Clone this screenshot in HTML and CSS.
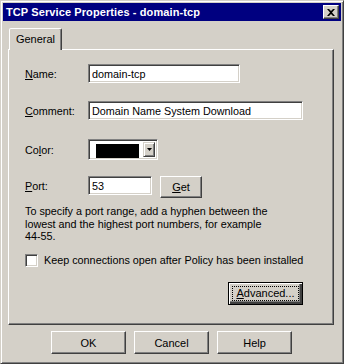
FILE: index.html
```html
<!DOCTYPE html>
<html lang="en">
<head>
    <meta charset="UTF-8">
    <title>TCP Service Properties - domain-tcp</title>
    <link rel="stylesheet" href="styles.css">
</head>
<body>

    <div class="window">
        <!-- Title bar -->
        <div class="titlebar">
            <span class="title">TCP Service Properties - domain-tcp</span>
            <button class="close-btn">
                <svg width="8" height="7" viewBox="0 0 8 7">
                    <path d="M0 0h2l2 2 2-2h2l-3 3.5 3 3.5h-2l-2-2-2 2h-2l3-3.5z" fill="#000"/>
                </svg>
            </button>
        </div>

        <!-- Tab sheet -->
        <div class="sheet">
            <div class="tabs">
                <div class="tab">General</div>
            </div>
            <div class="panel">
                <div class="row row-name">
                    <label class="label"><u>N</u>ame:</label>
                    <div class="field field-name">domain-tcp</div>
                </div>
                <div class="row row-comment">
                    <label class="label"><u>C</u>omment:</label>
                    <div class="field field-comment">Domain Name System Download</div>
                </div>
                <div class="row row-color">
                    <label class="label">Co<u>l</u>or:</label>
                    <div class="combo">
                        <div class="swatch-area"><div class="swatch"></div></div>
                        <div class="combo-btn">
                            <svg width="5" height="3" viewBox="0 0 5 3"><path d="M0 0h5l-2.5 3z" fill="#000"/></svg>
                        </div>
                    </div>
                </div>
                <div class="row row-port">
                    <label class="label"><u>P</u>ort:</label>
                    <div class="field field-port">53</div>
                    <button class="btn btn-get"><u>G</u>et</button>
                </div>
                <p class="hint">To specify a port range, add a hyphen between the<br>lowest and the highest port numbers, for example<br>44-55.</p>
                <div class="check-row">
                    <span class="checkbox"></span>
                    <span class="check-label">Keep connections open after Policy has been installed</span>
                </div>
                <button class="btn btn-default"><span class="focus"><u>A</u>dvanced...</span></button>
            </div>
        </div>

        <!-- Dialog buttons -->
        <div class="dialog-buttons">
            <button class="btn btn-dialog">OK</button>
            <button class="btn btn-dialog">Cancel</button>
            <button class="btn btn-dialog">Help</button>
        </div>
    </div>

</body>
</html>
```

FILE: styles.css
```css
/* Global */
body, html {
    margin: 0;
    padding: 0;
    background-color: #d4d0c8;
    font-family: "Liberation Sans", Arial, sans-serif;
    font-size: 10.8px;
    color: #000;
}

u {
    text-decoration: underline;
    text-underline-offset: 1px;
}

/* Window frame */
.window {
    width: 344px;
    height: 364px;
    box-sizing: border-box;
    border: 1px solid;
    border-color: #d4d0c8 #404040 #404040 #d4d0c8;
    box-shadow: inset 1px 1px #fff, inset -1px -1px #808080;
    padding: 2px;
    background-color: #d4d0c8;
}

/* Title bar */
.titlebar {
    height: 18px;
    display: flex;
    align-items: center;
    justify-content: space-between;
    padding: 0 2px 0 3px;
    background-color: #000080;
    color: #fff;
}

.title {
    font-weight: bold;
    font-size: 11px;
    letter-spacing: 0.1px;
}

.close-btn {
    width: 16px;
    height: 14px;
    padding: 0;
    display: flex;
    align-items: center;
    justify-content: center;
    background-color: #d4d0c8;
    border: 1px solid;
    border-color: #fff #404040 #404040 #fff;
    box-shadow: inset -1px -1px #808080;
}

/* Tab sheet */
.sheet {
    margin: 7px 0 0 5px;
    width: 326px;
}

.tabs {
    display: flex;
    padding-left: 1px;
}

.tab {
    position: relative;
    z-index: 1;
    width: 53px;
    height: 22px;
    box-sizing: border-box;
    margin-bottom: -1px;
    padding-top: 4px;
    text-align: center;
    font-size: 11px;
    background-color: #d4d0c8;
    border: 1px solid;
    border-bottom: none;
    border-color: #fff #404040 transparent #fff;
    border-radius: 2px 2px 0 0;
    box-shadow: inset -1px 0 #808080;
}

.panel {
    height: 276px;
    box-sizing: border-box;
    border: 1px solid;
    border-color: #fff #404040 #404040 #fff;
    box-shadow: inset -1px -1px #808080;
    padding: 14px 30px 0 16px;
    display: flex;
    flex-direction: column;
}

/* Form rows */
.row {
    display: flex;
    align-items: center;
}

.row-comment {
    margin-top: 18px;
}

.row-color {
    margin-top: 19px;
}

.row-port {
    margin-top: 16px;
    align-items: flex-start;
}

.label {
    width: 63px;
    flex-shrink: 0;
}

.row-port .label {
    line-height: 20px;
}

.field {
    height: 19px;
    box-sizing: border-box;
    border: 1px solid;
    border-color: #808080 #fff #fff #808080;
    box-shadow: inset 1px 1px #404040, inset -1px -1px #d4d0c8;
    background-color: #fff;
    padding: 2px 0 0 3px;
    line-height: 14px;
    white-space: nowrap;
}

.field-name {
    width: 152px;
}

.field-comment {
    width: 215px;
}

.field-port {
    width: 64px;
}

/* Colour combo */
.combo {
    width: 70px;
    height: 21px;
    box-sizing: border-box;
    border: 1px solid;
    border-color: #808080 #fff #fff #808080;
    box-shadow: inset 1px 1px #404040, inset -1px -1px #d4d0c8;
    background-color: #fff;
    padding: 2px;
    display: flex;
}

.swatch-area {
    flex: 1;
    padding: 2px 4px 1px 5px;
}

.swatch {
    height: 14px;
    background-color: #000;
}

.combo-btn {
    width: 12px;
    box-sizing: border-box;
    display: flex;
    align-items: center;
    justify-content: center;
    background-color: #d4d0c8;
    border: 1px solid;
    border-color: #d4d0c8 #404040 #404040 #d4d0c8;
    box-shadow: inset 1px 1px #fff, inset -1px -1px #808080;
}

/* Buttons */
.btn {
    font-family: "Liberation Sans", Arial, sans-serif;
    font-size: 11px;
    color: #000;
    height: 23px;
    padding: 0;
    background-color: #d4d0c8;
    border: 1px solid;
    border-color: #fff #404040 #404040 #fff;
    box-shadow: inset -1px -1px #808080;
}

.btn-get {
    width: 42px;
    height: 22px;
    margin-left: 8px;
}

.btn-default {
    align-self: flex-end;
    width: 75px;
    height: 23px;
    margin-top: 15px;
    border-color: #000;
    box-shadow: inset 1px 1px #fff, inset -2px -2px #404040, inset -3px -3px #808080;
    display: flex;
    padding: 3px;
}

.focus {
    flex: 1;
    outline: 1px dotted #000;
    outline-offset: -1px;
    line-height: 15px;
}

/* Hint text and checkbox */
.hint {
    margin: 7px 0 0;
    line-height: 12.5px;
}

.check-row {
    display: flex;
    align-items: center;
    margin-top: 11px;
    gap: 6px;
}

.check-label {
    white-space: nowrap;
}

.checkbox {
    width: 13px;
    height: 13px;
    flex-shrink: 0;
    box-sizing: border-box;
    border: 1px solid;
    border-color: #808080 #fff #fff #808080;
    box-shadow: inset 1px 1px #404040, inset -1px -1px #d4d0c8;
    background-color: #fff;
}

/* Dialog buttons */
.dialog-buttons {
    display: flex;
    gap: 8px;
    margin-top: 6px;
    padding-left: 48px;
}

.btn-dialog {
    width: 75px;
}
```
